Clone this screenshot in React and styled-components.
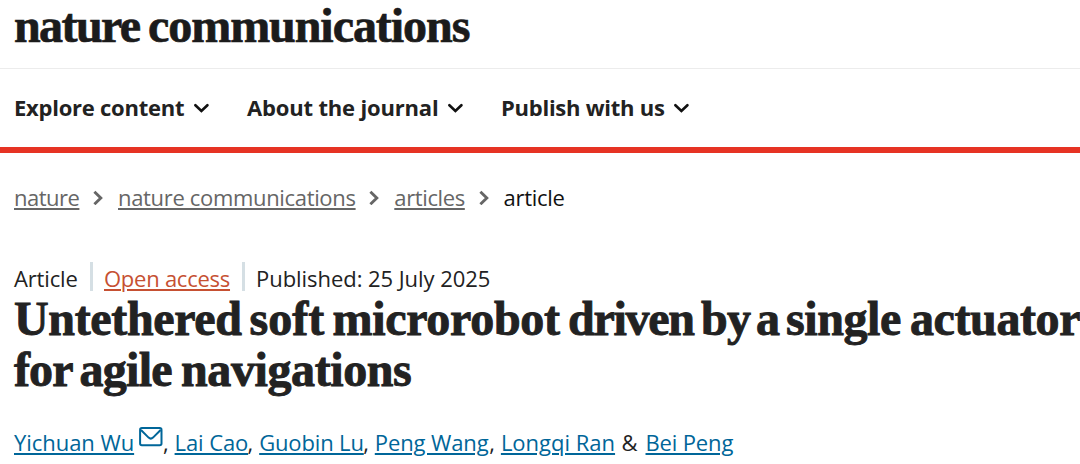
import styled, { createGlobalStyle } from "styled-components";

const logo = [
  { text: "nature", spacing: -1.6, width: 134 },
  { text: "communications", spacing: -1.05, width: 324 },
];

const menus = [
  { label: "Explore content", width: 170, spacing: -0.25 },
  { label: "About the journal", width: 191, spacing: -0.17 },
  { label: "Publish with us", width: 163, spacing: -0.25 },
];

const crumbs = [
  { label: "nature", width: 65, spacing: -0.5 },
  { label: "nature communications", width: 237.3, spacing: -0.33 },
  { label: "articles", width: 70.3, spacing: -0.38 },
];

const titleLines = [
  [
    { text: "Untethered", spacing: -0.35, width: 235.5 },
    { text: "soft", spacing: 0, width: 83 },
    { text: "microrobot", spacing: -0.3, width: 235.5 },
    { text: "driven", spacing: -1.3, width: 133 },
    { text: "by", spacing: -0.8, width: 55 },
    { text: "a", spacing: 0, width: 30 },
    { text: "single", spacing: -0.4, width: 124 },
    { text: "actuator", spacing: -0.4, width: 172 },
  ],
  [
    { text: "for", spacing: -0.9, width: 65.5 },
    { text: "agile", spacing: -0.7, width: 101.5 },
    { text: "navigations", spacing: -0.4, width: 232 },
  ],
];

const authors = [
  { name: "Yichuan Wu", width: 120, spacing: -0.05, mail: true, after: "," },
  { name: "Lai Cao", width: 73, spacing: -0.1, after: "," },
  { name: "Guobin Lu", width: 104, spacing: -0.15, after: "," },
  { name: "Peng Wang", width: 114.5, spacing: -0.1, after: "," },
  { name: "Longqi Ran", width: 115, spacing: 0, after: " &" },
  { name: "Bei Peng", width: 87, spacing: -0.15, after: "" },
];

function App() {
  return (
    <>
      <GlobalStyle />
      <Page>
        <Header>
          <Logo>
            {logo.map((word) => (
              <Word key={word.text} $width={word.width} $spacing={word.spacing}>{word.text} </Word>
            ))}
          </Logo>
        </Header>
        <Nav>
          {menus.map((menu) => (
            <MenuItem key={menu.label}>
              <MenuLabel $width={menu.width} $spacing={menu.spacing}>{menu.label}</MenuLabel>
              <svg width="16" height="10" viewBox="0 0 16 10" fill="none">
                <path d="M2.4 2.2 8.4 8l6-5.8" stroke="#111" strokeWidth="2.6" strokeLinecap="round" />
              </svg>
            </MenuItem>
          ))}
        </Nav>
        <Breadcrumbs>
          {crumbs.map((crumb) => (
            <Crumb key={crumb.label}>
              <Link $color="#666" $width={crumb.width} $spacing={crumb.spacing}>{crumb.label}</Link>
              <svg width="10" height="16" viewBox="0 0 10 16" fill="none">
                <path d="M1.4 2.8 7.8 9l-6.4 6.2" stroke="#666" strokeWidth="2.9" />
              </svg>
            </Crumb>
          ))}
          <Current>article</Current>
        </Breadcrumbs>
        <Meta>
          <MetaItem $width={64} $spacing={-0.15}>Article</MetaItem>
          <Divider />
          <Link $color="#c65032" $width={126} $spacing={-0.25}>Open access</Link>
          <Divider />
          <MetaItem $width={234} $spacing={-0.05}>Published: 25 July 2025</MetaItem>
        </Meta>
        <Title>
          {titleLines.map((line, i) => (
            <TitleLine key={i}>
              {line.map((word) => (
                <Word key={word.text} $width={word.width} $spacing={word.spacing}>{word.text} </Word>
              ))}
            </TitleLine>
          ))}
        </Title>
        <Authors>
          {authors.map((author) => (
            <Author key={author.name}>
              <Link $color="#006699" $width={author.width} $spacing={author.spacing}>{author.name}</Link>
              {author.mail && (
                <Mail width="24" height="20" viewBox="0 0 24 20" fill="none">
                  <rect x="1.1" y="1.1" width="21.4" height="17.2" rx="1.8" stroke="#069" strokeWidth="2" />
                  <path d="m2 3 7.6 7.6q2.2 2 4.4 0L21.6 3" stroke="#069" strokeWidth="2" />
                </Mail>
              )}
              {author.after}
            </Author>
          ))}
        </Authors>
      </Page>
    </>
  );
}
export default App;

const GlobalStyle = createGlobalStyle`
body {
margin: 0;
background: #fff;
overflow: hidden;
}
`;

const Page = styled.div`
width: 1080px;
height: 464px;
overflow: hidden;
color: #222;
font-family: "Open Sans", "Noto Sans", sans-serif;
font-size: 22px;
line-height: 30px;
white-space: pre;
`;

const Header = styled.header`
height: 68px;
padding-left: 14px;
border-bottom: 1px solid #ececec;
`;

const Word = styled.span`
flex: none;
width: ${(props) => props.$width}px;
letter-spacing: ${(props) => props.$spacing}px;
`;

const Logo = styled.div`
display: flex;
color: #1b1b1b;
font-family: "Liberation Serif", serif;
font-size: 48px;
font-weight: 700;
line-height: 51px;
-webkit-text-stroke: 0.7px #1b1b1b;
`;

const Nav = styled.nav`
display: flex;
align-items: center;
gap: 38px;
height: 78px;
padding-left: 14px;
border-bottom: 6px solid #e63323;
`;

const MenuItem = styled.div`
display: flex;
align-items: center;
gap: 9px;
`;

const MenuLabel = styled.span`
width: ${(props) => props.$width}px;
padding-bottom: 2px;
font-weight: 700;
letter-spacing: ${(props) => props.$spacing}px;
`;

const Link = styled.a`
flex: none;
width: ${(props) => props.$width}px;
color: ${(props) => props.$color};
letter-spacing: ${(props) => props.$spacing}px;
text-decoration: underline;
text-decoration-thickness: 2px;
text-underline-offset: 2px;
`;

const Breadcrumbs = styled.div`
display: flex;
align-items: center;
height: 30px;
margin-top: 29px;
padding-left: 14px;
`;

const Crumb = styled.div`
display: flex;
align-items: center;
gap: 14px;
margin-right: 15px;
`;

const Current = styled.span`
color: #111;
letter-spacing: -0.3px;
`;

const Meta = styled.div`
display: flex;
height: 30px;
margin-top: 51px;
padding-left: 14px;
`;

const MetaItem = styled.div`
width: ${(props) => props.$width}px;
letter-spacing: ${(props) => props.$spacing}px;
`;

const Divider = styled.div`
width: 3px;
height: 29px;
margin: -1px 11px 0 12px;
background: #d5dfe4;
`;

const Title = styled.h1`
margin: 0;
padding-left: 14px;
font-family: "Liberation Serif", serif;
font-size: 48px;
line-height: 51px;
-webkit-text-stroke: 0.9px #222;
`;

const TitleLine = styled.div`
display: flex;
`;

const Authors = styled.div`
display: flex;
gap: 5.9px;
margin-top: 32px;
padding-left: 14px;
`;

const Author = styled.div`
display: flex;
&:last-child {
margin-left: 2px;
}
`;

const Mail = styled.svg`
margin: 0 0 0 5px;
`;
